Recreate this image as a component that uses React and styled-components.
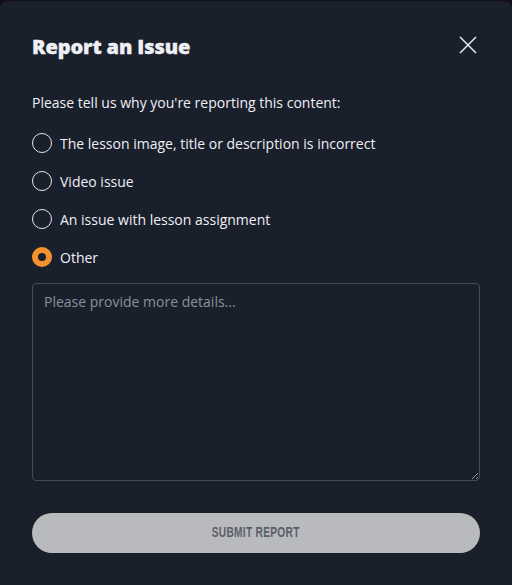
import React, { useState } from 'react'
import styled, { createGlobalStyle } from 'styled-components'

const Global = createGlobalStyle`
  html, body {
    margin: 0;
    padding: 0;
    background: #120f16;
  }
  body {
    font-family: "Open Sans", "Liberation Sans", sans-serif;
  }
`

const options = [
  'The lesson image, title or description is incorrect',
  'Video issue',
  'An issue with lesson assignment',
  'Other',
]

const App = () => {
  const [picked, setPicked] = useState(3)
  return (
    <>
      <Global />
      <Modal>
        <Header>
          <Title>Report an Issue</Title>
          <Close aria-label="Close">
            <svg width="18" height="18" viewBox="0 0 18 18" fill="none">
              <path d="M1 1L17 17M17 1L1 17" stroke="#e9ebf0" strokeWidth="1.5" />
            </svg>
          </Close>
        </Header>
        <Prompt>Please tell us why you're reporting this content:</Prompt>
        <Options>
          {options.map((o, i) => (
            <Option key={o} onClick={() => setPicked(i)}>
              <Radio checked={picked === i} />
              <span>{o}</span>
            </Option>
          ))}
        </Options>
        <Details placeholder="Please provide more details..." />
        <Submit>
          <SubmitLabel>SUBMIT REPORT</SubmitLabel>
        </Submit>
      </Modal>
    </>
  )
}

export default App

const Modal = styled.div`
  margin-top: 1px;
  height: 584px;
  box-sizing: border-box;
  background: #1a1f2c;
  border-radius: 8px 8px 0 0;
  padding: 32px 32px 0 32px;
  display: flex;
  flex-direction: column;
`

const Header = styled.div`
  display: flex;
  justify-content: space-between;
  align-items: center;
  height: 26px;
`

const Title = styled.h2`
  margin: 0;
  font-size: 20px;
  font-weight: 800;
  color: #eef0f4;
  letter-spacing: -0.1px;
  -webkit-text-stroke: 0.4px #eef0f4;
`

const Close = styled.button`
  background: none;
  border: none;
  padding: 0 0 2px 0;
  margin-right: 3px;
  display: flex;
  cursor: pointer;
`

const Prompt = styled.p`
  margin: 34px 0 0 0;
  font-size: 14px;
  line-height: 20px;
  color: #eef0f4;
`

const Options = styled.div`
  display: flex;
  flex-direction: column;
  gap: 18px;
  margin-top: 20px;
`

const Option = styled.label`
  display: flex;
  align-items: center;
  gap: 8px;
  height: 20px;
  font-size: 14px;
  color: #eef0f4;
  cursor: pointer;
`

const Radio = styled.span`
  width: 20px;
  height: 20px;
  box-sizing: border-box;
  border-radius: 50%;
  flex-shrink: 0;
  border: ${p => (p.checked ? '6px solid #f5922e' : '1.5px solid #e3e5ea')};
  background: ${p => (p.checked ? '#1a1f2c' : 'transparent')};
`

const Details = styled.textarea`
  margin-top: 16px;
  height: 198px;
  box-sizing: border-box;
  background: #1a1f2c;
  border: 1px solid #464b56;
  border-radius: 4px;
  padding: 8px 11px;
  font-family: "Open Sans", "Liberation Sans", sans-serif;
  font-size: 14px;
  line-height: 20px;
  color: #eef0f4;
  resize: vertical;
  outline: none;
  &::placeholder {
    color: #8b909a;
  }
`

const Submit = styled.button`
  margin-top: 32px;
  height: 40px;
  padding: 0 0 3px 0;
  border: none;
  border-radius: 20px;
  background: #b9babe;
  color: #5b5f68;
  display: flex;
  align-items: center;
  justify-content: center;
  cursor: pointer;
`

const SubmitLabel = styled.span`
  display: inline-block;
  font-family: "Liberation Sans", sans-serif;
  font-weight: 700;
  font-size: 15px;
  letter-spacing: 0.4px;
  transform: scaleX(0.68);
`
